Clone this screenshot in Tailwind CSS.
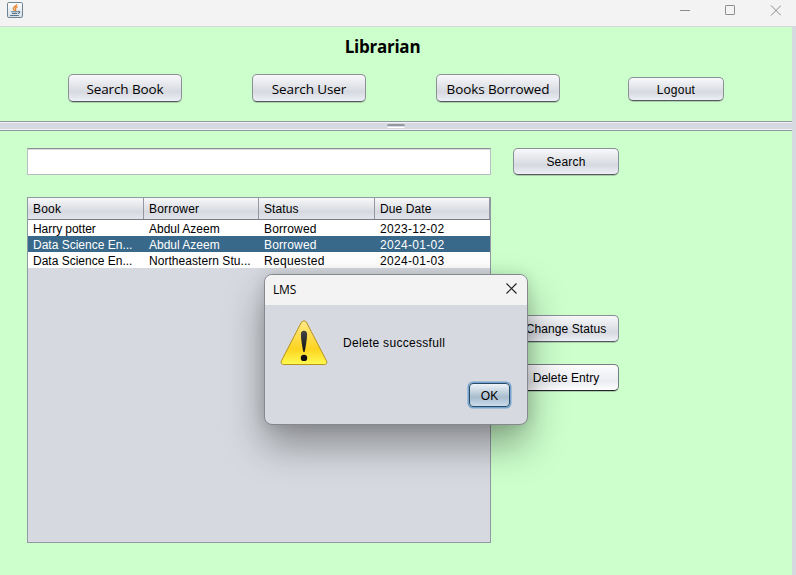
<!DOCTYPE html>
<html lang="en">
<head>
<meta charset="utf-8">
<title>Librarian</title>
<script src="https://cdn.jsdelivr.net/npm/@tailwindcss/browser@4"></script>
</head>
<body class="relative h-[575px] w-[796px] overflow-hidden bg-[#d6d9df] font-['Liberation_Sans',Arial,sans-serif] text-[12px] leading-4 text-black">
<header class="flex h-[27px] items-start justify-between border-b border-[#d6d7dc] bg-[#f3f3f3] pl-[7px] pr-[15px]">
  <svg class="mt-[2px]" width="16" height="16" viewBox="0 0 16 16" fill="none">
    <defs><linearGradient id="cup" x2="0" y2="1"><stop stop-color="#fff"/><stop offset="1" stop-color="#d4dde4"/></linearGradient></defs>
    <rect x=".5" y=".5" width="15" height="15" rx="1.3" fill="url(#cup)" stroke="#6e8494"/>
    <path d="M9.8 2.2C9.8 4 6.2 4.8 6.4 6.4c.1 1 .9 1.4 1 2.4M10.6 4.6C8.4 5.6 8 6.5 8.7 7.4c.4.6 0 1.2-.3 1.6" stroke="#e8822c" stroke-width="1.3"/>
    <path d="M4.2 9.7h6.6M5 11.5h5.2M3.2 13.5h8.6M11 9.6c2.3-.8 2.4 1.2 0 1.9" stroke="#56758d" stroke-width="1.1"/>
  </svg>
  <svg class="mt-[5px]" width="102" height="11" viewBox="0 0 102 11" fill="none" stroke="#8c8c8c">
    <path d="M1 5.5h10"/><rect x="46.5" y=".5" width="9" height="9" rx=".6"/><path d="m92 .5 10 10m0-10-10 10"/>
  </svg>
</header>
<main class="w-[792px]">
  <section class="h-[94px] bg-[#ccffcc]">
    <h1 class="flex h-[47px] items-start justify-center pr-[27px] pt-[9px] font-['Open_Sans',sans-serif] text-[17px] font-bold leading-[22px]"><span class="tracking-[-0.25px]">Librarian</span></h1>
    <nav class="flex items-start pl-[68px] font-['Open_Sans',sans-serif] text-[13.5px]">
      <button class="h-[28px] w-[114px] rounded-[5px] border border-[#8d8f98] border-b-[#565962] bg-linear-to-b from-[#f8f9fb] via-[#d6d9df] via-65% to-[#eef0f7] pt-[2px] shadow-[0_1px_0_#a9cfaa]"><span class="tracking-[-0.1px]">Search Book</span></button>
      <button class="ml-[70px] h-[28px] w-[114px] rounded-[5px] border border-[#8d8f98] border-b-[#565962] bg-linear-to-b from-[#f8f9fb] via-[#d6d9df] via-65% to-[#eef0f7] pt-[2px] shadow-[0_1px_0_#a9cfaa]"><span class="tracking-[-0.1px]">Search User</span></button>
      <button class="ml-[70px] h-[28px] w-[124px] rounded-[5px] border border-[#8d8f98] border-b-[#565962] bg-linear-to-b from-[#f8f9fb] via-[#d6d9df] via-65% to-[#eef0f7] pt-[2px] shadow-[0_1px_0_#a9cfaa]"><span class="tracking-[-0.1px]">Books Borrowed</span></button>
      <button class="ml-[68px] mt-[3px] h-[24px] w-[96px] rounded-[5px] border border-[#8d8f98] border-b-[#565962] bg-linear-to-b from-[#f8f9fb] via-[#d6d9df] via-65% to-[#eef0f7] pt-px font-['Liberation_Sans',Arial,sans-serif] text-[12px] shadow-[0_1px_0_#a9cfaa]"><span class="tracking-[0.3px]">Logout</span></button>
    </nav>
  </section>
  <div class="flex h-[10px] items-center justify-center border-y border-[#9297a1] bg-[#d6d9df] shadow-[inset_0_1px_0_#f0f1f4,inset_0_-1px_0_#f0f1f4]">
    <span class="h-[4px] w-[18px] rounded-[2px] border-t-2 border-b border-t-[#9297a1] border-b-white bg-[#d6d9df]"></span>
  </div>
  <section class="flex h-[444px] items-start bg-[#ccffcc] pl-[27px] pt-[17px]">
    <div class="w-[464px]">
      <div class="h-[27px] border border-[#b9bcc3] border-t-[#8b8e96] bg-white shadow-[inset_0_1px_0_#d9dade]"></div>
      <div class="mt-[22px] h-[346px] border border-[#9297a1] bg-[#d6d9df]">
        <div class="grid h-[22px] grid-cols-[116px_115px_116px_115px] border-b border-[#777b84] bg-linear-to-b from-[#f7f8fa] via-[#d6d9df] via-65% to-[#e2e5ec] leading-[23px]">
          <span class="h-[21px] border-r border-[#9297a1] pl-[5px] tracking-[0.2px]">Book</span>
          <span class="h-[21px] border-r border-[#9297a1] pl-[5px] tracking-[0.2px]">Borrower</span>
          <span class="h-[21px] border-r border-[#9297a1] pl-[5px] tracking-[0.1px]">Status</span>
          <span class="h-[21px] border-r border-[#9297a1] pl-[5px] tracking-[0.1px]">Due Date</span>
        </div>
        <div class="grid h-[16px] grid-cols-[116px_115px_116px_115px] bg-white pl-[5px] leading-[19px]">
          <span class="tracking-[-0.05px]">Harry potter</span><span>Abdul Azeem</span><span class="tracking-[0.15px]">Borrowed</span><span class="tracking-[0.3px]">2023-12-02</span>
        </div>
        <div class="grid h-[16px] grid-cols-[116px_115px_116px_115px] bg-[#39698a] pl-[5px] leading-[19px] text-white">
          <span>Data Science En...</span><span>Abdul Azeem</span><span class="tracking-[0.15px]">Borrowed</span><span class="tracking-[0.3px]">2024-01-02</span>
        </div>
        <div class="grid h-[16px] grid-cols-[116px_115px_116px_115px] bg-white pl-[5px] leading-[19px]">
          <span>Data Science En...</span><span class="tracking-[0.05px]">Northeastern Stu...</span><span class="tracking-[0.3px]">Requested</span><span class="tracking-[0.3px]">2024-01-03</span>
        </div>
      </div>
    </div>
    <div class="ml-[22px] flex w-[106px] flex-col">
      <button class="h-[27px] rounded-[5px] border border-[#8d8f98] border-b-[#565962] bg-linear-to-b from-[#f8f9fb] via-[#d6d9df] via-65% to-[#eef0f7] shadow-[0_1px_0_#a9cfaa]"><span class="tracking-[0.2px]">Search</span></button>
      <button class="mt-[140px] h-[27px] whitespace-nowrap rounded-[5px] border border-[#8d8f98] border-b-[#565962] bg-linear-to-b from-[#f8f9fb] via-[#d6d9df] via-65% to-[#eef0f7] shadow-[0_1px_0_#a9cfaa]"><span class="tracking-[0.1px]">Change Status</span></button>
      <button class="mt-[22px] h-[27px] rounded-[5px] border border-[#777a84] border-b-[#24262c] bg-linear-to-b from-[#fdfdfe] via-[#eaecf1] via-65% to-[#ffffff] shadow-[0_1px_0_#a9cfaa]"><span class="tracking-[0.05px]">Delete Entry</span></button>
    </div>
  </section>
</main>

<div class="absolute left-[264px] top-[274px] h-[151px] w-[264px] rounded-[8px] border border-[#85888d] bg-[#d6d9df] shadow-[0_20px_38px_rgba(0,0,0,0.36),0_0_14px_rgba(0,0,0,0.12)]" role="dialog">
  <div class="flex h-[30px] items-center justify-between rounded-t-[7px] bg-[#f3f3f3] pl-[8px] pr-[10px] font-['Open_Sans',sans-serif] text-[12px]">
    <span class="tracking-[-0.2px]">LMS</span>
    <svg class="-mt-[3px]" width="11" height="11" viewBox="0 0 11 11" stroke="#222" stroke-width="1.15"><path d="m.5.5 10 10m0-10-10 10"/></svg>
  </div>
  <div class="flex items-start pl-[15px] pt-[15px]">
    <svg width="48" height="46" viewBox="0 0 48 46">
      <defs>
        <linearGradient id="warn" x2="0" y2="1"><stop stop-color="#ffe98b"/><stop offset=".35" stop-color="#ffde50"/><stop offset=".65" stop-color="#fdd420"/><stop offset="1" stop-color="#fffb50"/></linearGradient>
        <linearGradient id="mark" x2="0" y2="1"><stop stop-color="#444"/><stop offset="1" stop-color="#111"/></linearGradient>
      </defs>
      <path d="M21.4 2.2Q24-.8 26.4 2.2L46.3 40.5Q48 44.2 44.3 44.5H3.8Q0 44.2 1.6 40.5Z" fill="url(#warn)" stroke="#b7921d"/>
      <path d="M24 10.8c2.1 0 3.2 1.4 3.1 3.7C27 20 25.7 27 24.7 31.4q-.7 1-1.4 0C22.3 27 21 20 20.9 14.5c-.1-2.3 1-3.7 3.1-3.7Z" fill="url(#mark)"/>
      <circle cx="24" cy="37.9" r="3.2" fill="#111"/>
    </svg>
    <p class="ml-[15px] mt-[15px] tracking-[0.3px]">Delete successfull</p>
  </div>
  <div class="flex justify-end pr-[17px] pt-[17px]">
    <button class="h-[24px] w-[41px] rounded-[4px] border border-[#2c4c65] bg-linear-to-b from-[#eef4f8] via-[#a8bccd] via-60% to-[#c9dded] pt-[2px] shadow-[0_0_0_1.5px_#73a4d1]">OK</button>
  </div>
</div>
</body>
</html>
